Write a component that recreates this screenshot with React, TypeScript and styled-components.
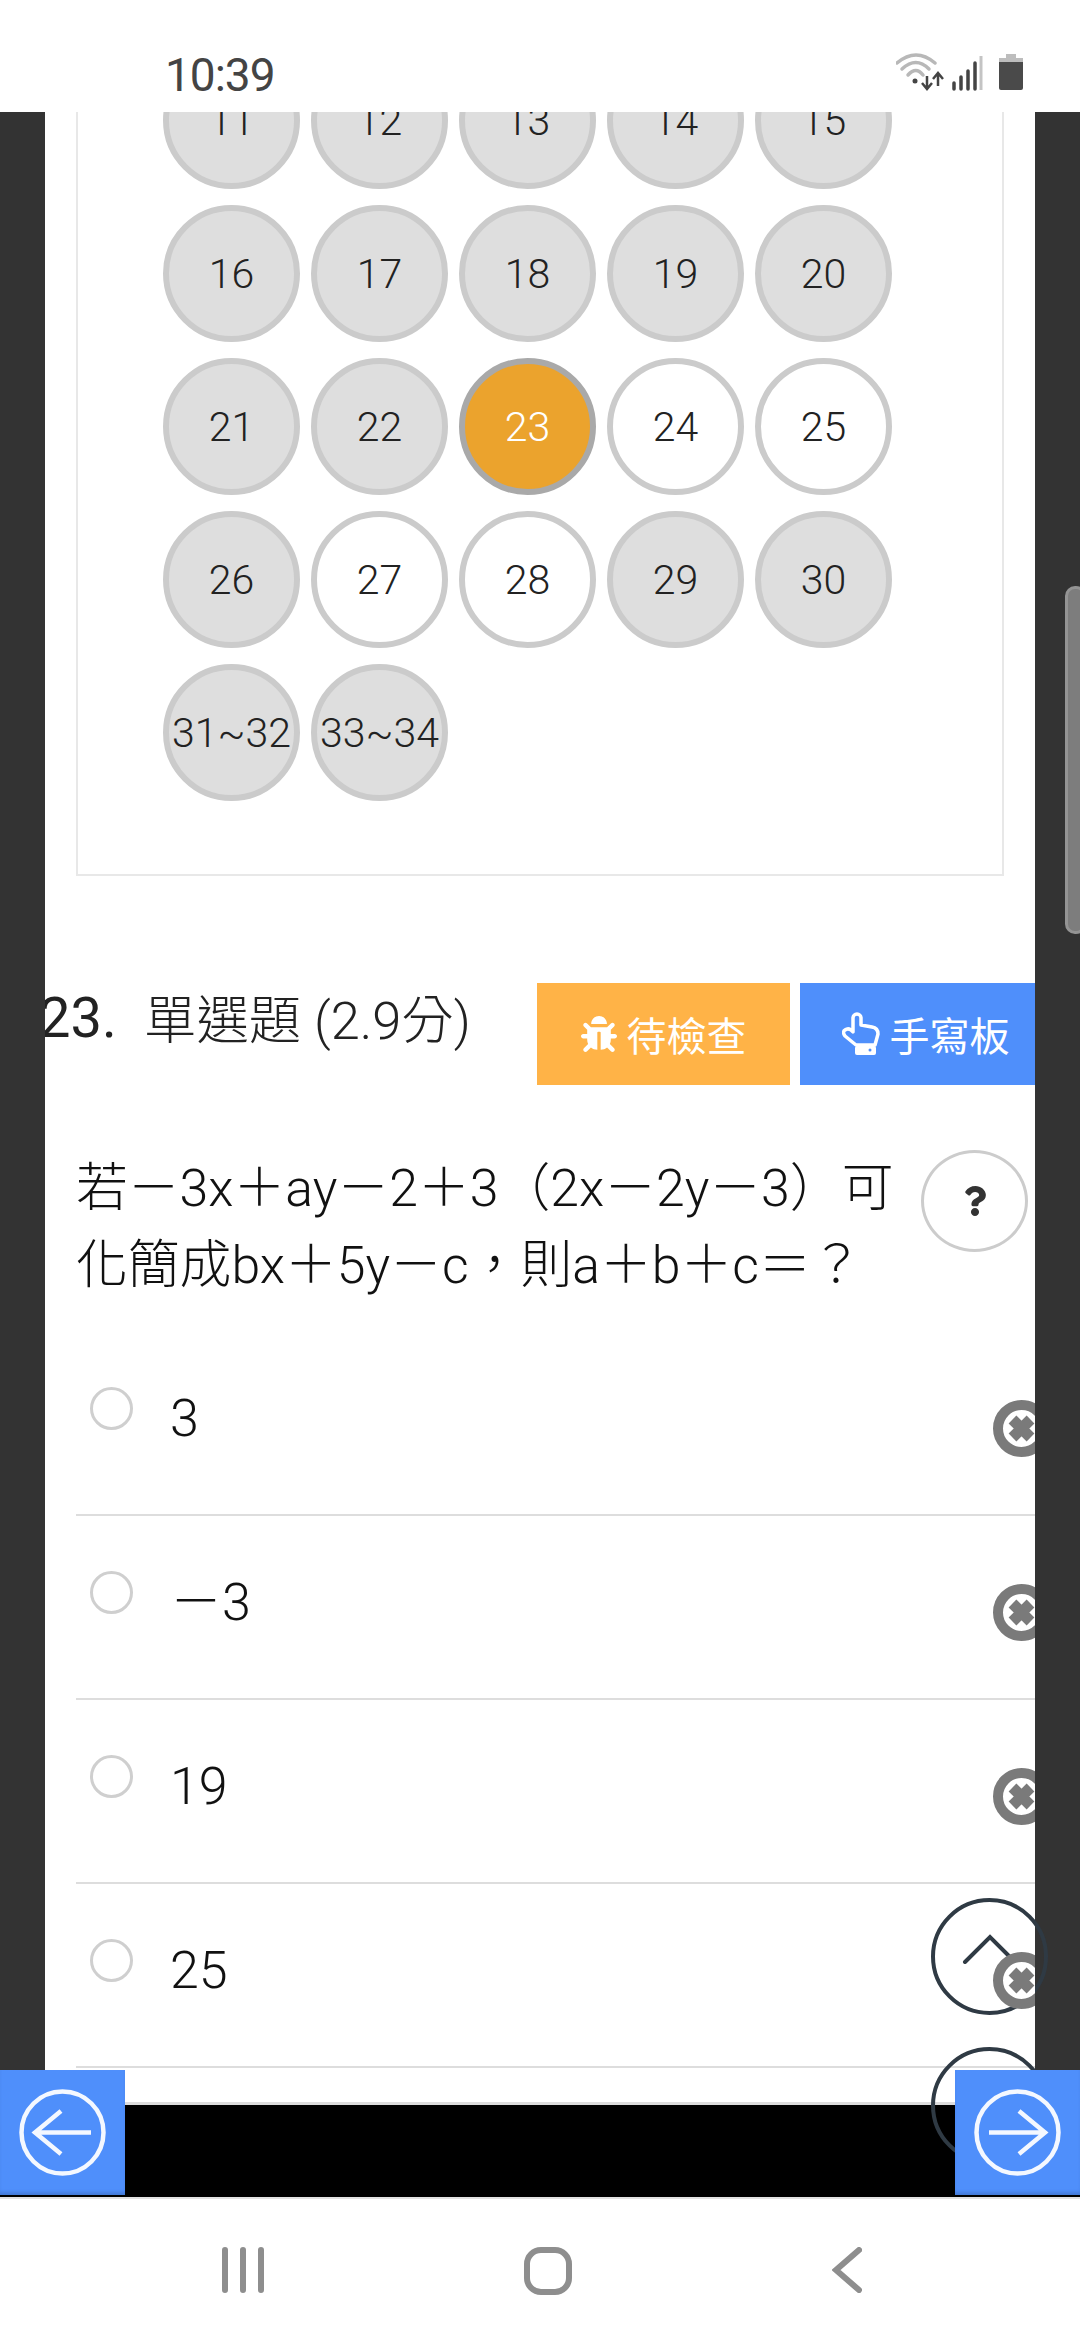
import * as React from 'react';
import styled, { createGlobalStyle } from 'styled-components';
import { FaBug, FaQuestion } from 'react-icons/fa';

const cjk = '"Roboto", "Noto Sans CJK TC", sans-serif';

const GlobalStyle = createGlobalStyle`
  html, body {
    margin: 0;
    padding: 0;
    background: #fff;
  }
  * {
    box-sizing: border-box;
  }
`;

const Screen = styled.div`
  position: relative;
  width: 1080px;
  height: 2340px;
  display: flex;
  flex-direction: column;
  overflow: hidden;
  font-family: ${cjk};
  background: #fff;
`;

const StatusBar = styled.div`
  height: 112px;
  flex: none;
  padding: 48px 54px 0 165px;
  display: flex;
  justify-content: space-between;
  align-items: flex-start;
  background: #fff;
`;

const Clock = styled.span`
  font-size: 46px;
  line-height: 54px;
  font-weight: 400;
  color: #444;
  letter-spacing: -1px;
`;

const StatusIconBox = styled.div`
  padding-top: 5px;
`;

const Viewport = styled.div`
  flex: 1;
  min-height: 0;
  display: flex;
  flex-direction: column;
  overflow: hidden;
  background: #333;
`;

const Page = styled.div`
  flex: 1;
  min-height: 0;
  margin: 0 45px;
  background: #fff;
`;

const Card = styled.div`
  margin: -81px 31px 0;
  padding: 19px 0 73px 85px;
  border: 2px solid #e8e8e8;
  display: grid;
  grid-template-columns: repeat(5, 137px);
  column-gap: 11px;
  row-gap: 16px;
`;

const Bubble = styled.div<{ $state: 'done' | 'open' | 'current' }>`
  width: 137px;
  height: 137px;
  border-radius: 50%;
  display: flex;
  align-items: center;
  justify-content: center;
  font-size: 41px;
  font-weight: 300;
  white-space: nowrap;
  border: 6px solid ${(p) => (p.$state === 'current' ? '#a9a9a9' : '#cbcbcb')};
  color: ${(p) => (p.$state === 'current' ? '#fff' : '#222')};
  background: ${(p) =>
    p.$state === 'current' ? '#eba32d' : p.$state === 'done' ? '#dedede' : '#fff'};
`;

const QuestionHead = styled.div`
  margin-top: 107px;
  height: 102px;
  display: flex;
  overflow: hidden;
`;

const QuestionNo = styled.span`
  margin-left: -6px;
  width: 59px;
  flex: none;
  font-size: 56px;
  line-height: 71px;
  color: #222;
  white-space: nowrap;
`;

const QuestionType = styled.span`
  margin-left: 46px;
  flex: 1;
  font-size: 52.4px;
  line-height: 77px;
  font-weight: 300;
  color: #222;
  white-space: nowrap;
`;

const Tag = styled.div<{ $bg: string; $width: number; $inset: number }>`
  width: ${(p) => p.$width}px;
  flex: none;
  margin-left: 10px;
  padding-left: ${(p) => p.$inset}px;
  display: flex;
  align-items: center;
  justify-content: center;
  gap: 10px;
  font-size: 40px;
  color: #fff;
  background: ${(p) => p.$bg};
`;

const QuestionBody = styled.div`
  margin-top: 65px;
  padding-left: 31px;
  display: flex;
  align-items: flex-start;
`;

const QuestionText = styled.div`
  width: 845px;
  flex: none;
  font-size: 51.8px;
  line-height: 77px;
  font-weight: 300;
  color: #111;
`;

const HelpButton = styled.div`
  width: 107px;
  height: 102px;
  flex: none;
  display: flex;
  align-items: center;
  justify-content: center;
  border: 3px solid #ccc;
  border-radius: 50%;
  color: #333;
`;

const OptionList = styled.div`
  margin: 28px 0 0 31px;
`;

const OptionRow = styled.div`
  height: 184px;
  padding-left: 14px;
  display: flex;
  align-items: flex-start;
  border-bottom: 2px solid #ddd;
`;

const Radio = styled.div`
  width: 43px;
  height: 43px;
  flex: none;
  margin-top: 55px;
  border: 3px solid #cfcfcf;
  border-radius: 50%;
  background: #fff;
`;

const OptionLabel = styled.div`
  flex: 1;
  margin: 56px 0 0 37px;
  font-size: 52px;
  line-height: 62px;
  font-weight: 300;
  color: #111;
`;

const RemoveClip = styled.div`
  position: relative;
  z-index: 4;
  width: 42px;
  height: 57px;
  flex: none;
  margin-top: 68px;
  overflow: hidden;
`;

const FooterBar = styled.div`
  height: 95px;
  flex: none;
  border-top: 3px solid #ddd;
  background: #000;
`;

const ScrollThumb = styled.div`
  position: absolute;
  top: 586px;
  right: -6px;
  width: 21px;
  height: 348px;
  border-radius: 10px;
  border: 3px solid #949494;
  background: #7d7d7d;
`;

const RoundButton = styled.div<{ $top: number }>`
  position: absolute;
  z-index: 2;
  top: ${(p) => p.$top}px;
  left: 931px;
  width: 117px;
  height: 117px;
  padding-bottom: 16px;
  display: flex;
  align-items: center;
  justify-content: center;
  border: 4px solid #2f3a44;
  border-radius: 50%;
`;

const ArrowButton = styled.div<{ $side: 'left' | 'right' }>`
  position: absolute;
  z-index: 5;
  top: 2070px;
  ${(p) => p.$side}: 0;
  width: 125px;
  height: 125px;
  display: flex;
  align-items: center;
  justify-content: center;
  background: #4f8ffb;
  box-shadow: inset 0 -4px 4px -2px rgba(0, 0, 0, 0.18);
`;

const NavBar = styled.div`
  height: 143px;
  flex: none;
  padding: 48px 218px 0 222px;
  display: flex;
  justify-content: space-between;
  align-items: flex-start;
  border-top: 2px solid #e2e2e2;
  background: #fff;
`;

const StatusIcons = () => (
  <svg width="130" height="40" viewBox="0 0 130 40" fill="none">
    <g stroke="#b8b8b8" strokeWidth="3.5" strokeLinecap="round">
      <path d="M1 10Q20-6 39 10" />
      <path d="M6 16Q20 3 33 16" />
      <path d="M12 22Q20 13 27 22" />
    </g>
    <circle cx="19" cy="28" r="2.5" fill="#444" />
    <g stroke="#444" strokeWidth="2.5">
      <path d="M31 23V35M26 30L31 36L36 30" />
      <path d="M42 33V21M37 26L42 20L47 26" />
    </g>
    <g stroke="#444" strokeWidth="3.5" strokeLinecap="round">
      <path d="M58 30V36M65 24V36M72 18V36M79 10V36" />
    </g>
    <path d="M85 3V37" stroke="#c4c4c4" strokeWidth="3" />
    <path d="M110 1H120V5H127V9H103V5H110Z" fill="#bdbdbd" />
    <path d="M103 9H127V35Q127 37 125 37H105Q103 37 103 35Z" fill="#4a4a4a" />
  </svg>
);

const HandIcon = () => (
  <svg width="38" height="44" viewBox="0 0 38 44" fill="none">
    <path
      d="M11 20V6a4 4 0 0 1 8 0V13L30 15Q36 16 36 22L33 33H14L3 24Q0 20 3 18Q7 15 11 20Z"
      stroke="#fff"
      strokeWidth="3.5"
      strokeLinejoin="round"
    />
    <rect x="13" y="34" width="21" height="9" rx="2" fill="#fff" />
    <circle cx="28" cy="38" r="1.5" fill="#4f8ffb" />
  </svg>
);

const RemoveIcon = () => (
  <svg width="57" height="57" viewBox="0 0 57 57">
    <circle cx="28.5" cy="28.5" r="23.5" fill="#fff" stroke="#7a7a7a" strokeWidth="10" />
    <path d="M19.5 19.5L37.5 37.5M37.5 19.5L19.5 37.5" stroke="#7a7a7a" strokeWidth="11" />
  </svg>
);

const ChevronUp = () => (
  <svg width="56" height="30" viewBox="0 0 56 30" fill="none">
    <path d="M3 28L28 3L53 28" stroke="#2f3a44" strokeWidth="4" strokeLinecap="round" />
  </svg>
);

const CircleArrow = ({ flip }: { flip?: boolean }) => (
  <svg
    width="87"
    height="87"
    viewBox="0 0 87 87"
    fill="none"
    stroke="#f4f8ff"
    strokeWidth="4.5"
    style={flip ? { transform: 'scaleX(-1)' } : undefined}
  >
    <circle cx="43.5" cy="43.5" r="41" />
    <path d="M17 43.5H72M42 22L16 43.5L42 65" />
  </svg>
);

const pages: Array<[string, 'done' | 'open' | 'current']> = [
  ['11', 'done'], ['12', 'done'], ['13', 'done'], ['14', 'done'], ['15', 'done'],
  ['16', 'done'], ['17', 'done'], ['18', 'done'], ['19', 'done'], ['20', 'done'],
  ['21', 'done'], ['22', 'done'], ['23', 'current'], ['24', 'open'], ['25', 'open'],
  ['26', 'done'], ['27', 'open'], ['28', 'open'], ['29', 'done'], ['30', 'done'],
  ['31~32', 'done'], ['33~34', 'done'],
];

const options = ['3', '－3', '19', '25'];

export default function App() {
  return (
    <Screen>
      <GlobalStyle />
      <StatusBar>
        <Clock>10:39</Clock>
        <StatusIconBox>
          <StatusIcons />
        </StatusIconBox>
      </StatusBar>

      <Viewport>
        <Page>
          <Card>
            {pages.map(([label, state]) => (
              <Bubble key={label} $state={state}>
                {label}
              </Bubble>
            ))}
          </Card>

          <QuestionHead>
            <QuestionNo>23.</QuestionNo>
            <QuestionType>單選題 (2.9分)</QuestionType>
            <Tag $bg="#ffb347" $width={253} $inset={0}>
              <FaBug size={36} />
              待檢查
            </Tag>
            <Tag $bg="#4f8ffb" $width={235} $inset={16}>
              <HandIcon />
              手寫板
            </Tag>
          </QuestionHead>

          <QuestionBody>
            <QuestionText>若－3x＋ay－2＋3（2x－2y－3）可化簡成bx＋5y－c，則a＋b＋c＝？</QuestionText>
            <HelpButton>
              <FaQuestion size={30} />
            </HelpButton>
          </QuestionBody>

          <OptionList>
            {options.map((option) => (
              <OptionRow key={option}>
                <Radio />
                <OptionLabel>{option}</OptionLabel>
                <RemoveClip>
                  <RemoveIcon />
                </RemoveClip>
              </OptionRow>
            ))}
          </OptionList>
        </Page>
        <FooterBar />
      </Viewport>

      <NavBar>
        <svg width="42" height="46" viewBox="0 0 42 46">
          <path d="M3 3V43M21 3V43M39 3V43" stroke="#8e8e8e" strokeWidth="6" strokeLinecap="round" />
        </svg>
        <svg width="48" height="48" viewBox="0 0 48 48" fill="none">
          <rect x="3" y="3" width="42" height="42" rx="14" stroke="#8e8e8e" strokeWidth="6" />
        </svg>
        <svg width="30" height="46" viewBox="0 0 30 46" fill="none">
          <path d="M27 3L4 23L27 43" stroke="#8e8e8e" strokeWidth="6" strokeLinecap="round" />
        </svg>
      </NavBar>

      <ScrollThumb />
      <RoundButton $top={1898}>
        <ChevronUp />
      </RoundButton>
      <RoundButton $top={2047} />
      <ArrowButton $side="left">
        <CircleArrow />
      </ArrowButton>
      <ArrowButton $side="right">
        <CircleArrow flip />
      </ArrowButton>
    </Screen>
  );
}
